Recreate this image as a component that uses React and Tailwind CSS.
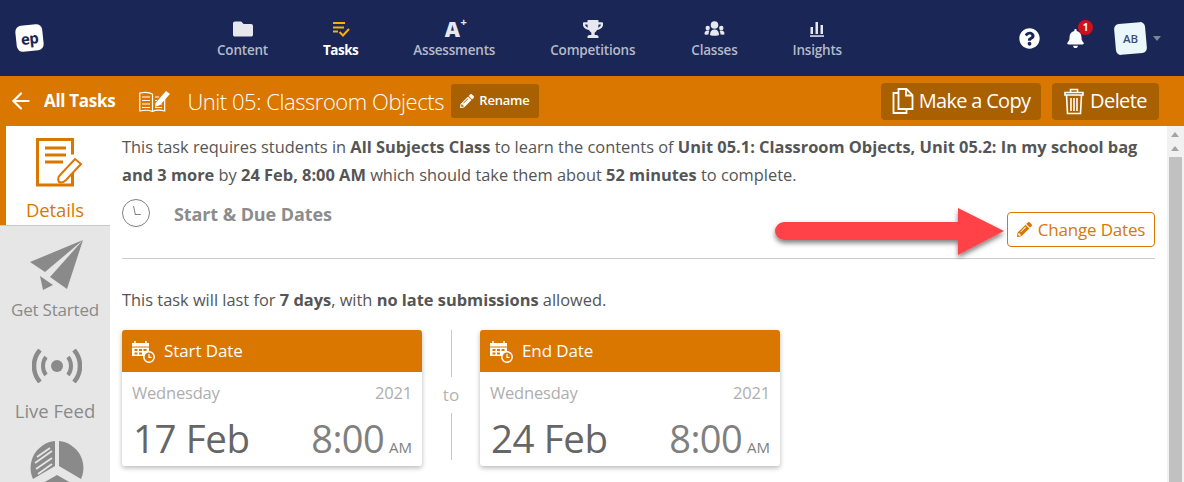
import { ArrowLeft } from 'lucide-react';
import { FaFolder, FaTrophy, FaQuestionCircle, FaBell, FaPencilAlt } from 'react-icons/fa';

const font = { fontFamily: '"Open Sans", "Noto Sans", sans-serif' };

function NavItem({ icon, label, active }) {
  return (
    <div className="flex flex-col items-center">
      <div className="h-[24px] flex items-center justify-center">{icon}</div>
      <div className={active ? 'text-[13.500px] leading-[18px] font-bold text-white tracking-[-0.5px]' : 'text-[13.500px] leading-[18px] font-semibold text-[#b4bac9] tracking-[-0.2px]'}>
        {label}
      </div>
    </div>
  );
}

function TasksIcon() {
  return (
    <svg width="18" height="16" viewBox="0 0 18 16" fill="none" stroke="#fbb000" strokeWidth="2">
      <path d="M1 2h12M1 6.500h11M1 10.500h5" />
      <path d="M7.500 11l3.500 3.500 6-6.500" />
    </svg>
  );
}

function APlusIcon() {
  return (
    <div className="relative text-[21px] leading-none font-extrabold text-[#e6e8ee] pr-1">
      A<span className="absolute top-[-3px] right-[-3px] text-[11px] font-bold">+</span>
    </div>
  );
}

function ClassesIcon() {
  return (
    <svg width="21" height="16" viewBox="0 0 20 16" fill="#e6e8ee">
      <circle cx="10" cy="4" r="3.800" />
      <circle cx="3.200" cy="7" r="2.200" />
      <circle cx="16.800" cy="7" r="2.200" />
      <path d="M5.500 14c0-3.500 1.500-5.500 4.500-5.500s4.500 2 4.500 5.500c0 1-9 1-9 0z" />
      <path d="M0 13c0-2 1-3.500 3.200-3.500 .8 0 1.200.2 1.600.4C4.200 11 4 12.300 4 13.600 2 13.800 0 13.800 0 13z" />
      <path d="M20 13c0-2-1-3.500-3.200-3.500-.8 0-1.200.2-1.600.4.600 1.100.8 2.400.8 3.700 2 .2 4 .2 4-.6z" />
    </svg>
  );
}

function InsightsIcon() {
  return (
    <svg width="14" height="15" viewBox="0 0 14 15" fill="#e6e8ee">
      <rect x="0.500" y="5" width="2.500" height="7" />
      <rect x="5.500" y="0" width="2.500" height="12" />
      <rect x="10.500" y="3" width="2.500" height="9" />
      <rect x="0" y="13.300" width="14" height="1.500" />
    </svg>
  );
}

function BookIcon() {
  return (
    <svg width="32" height="22" viewBox="0 0 32 22" fill="none" stroke="#fff" strokeWidth="1.200">
      <path d="M13.500 4C10 2 5 2 .8 3v18c4.500-1 9.500-1 12.700 .5 3-1.500 8-1.500 12.200-.5V9" />
      <path d="M13.500 4v17.500" />
      <path d="M3 7h8M3 10.500h8M3 14h8M3 17.500h8M16 14h7M16 17.500h7M16 10.500h2M16 7h4" />
      <path d="M17 12.500l10-11.500 4 3-10 11-5 2z" fill="#fff" stroke="none" />
    </svg>
  );
}

function CopyIcon() {
  return (
    <svg width="22" height="26" viewBox="0 0 22 26" fill="none" stroke="#fff" strokeWidth="1.800">
      <path d="M6.500 5H1.500v20h13v-4" />
      <path d="M6.500 1h8l6 6v14h-14z" />
      <path d="M14 1v6.500h6.500" />
    </svg>
  );
}

function TrashIcon() {
  return (
    <svg width="20" height="27" viewBox="0 0 20 27" fill="none" stroke="#fff" strokeWidth="1.600">
      <path d="M1 4.500h18v2.500H1z" />
      <path d="M6.500 4.500V1.500h7v3" />
      <path d="M2.500 7l1 18.500h13l1-18.500" />
      <path d="M7 10v13M10 10v13M13 10v13" />
    </svg>
  );
}

function DetailsIcon() {
  return (
    <svg width="48" height="49" viewBox="0 0 48 49" fill="none" stroke="#da7700">
      <path d="M36.500 30v17H1.500V1.500h35v15" strokeWidth="3" />
      <path d="M9 10h21M9 17h21M9 24h18" strokeWidth="2.800" />
      <path d="M23 44c-2-4 0-6 2-8l14-15 6 5-15 16c-2 2-5 3-7 2z" strokeWidth="2" fill="#fff" />
    </svg>
  );
}

function PlaneIcon() {
  return (
    <svg width="54" height="50" viewBox="0 0 54 50" fill="#8a8a8a">
      <path d="M53 0L0 22l15 10z" />
      <path d="M53 0L20 37l17 12z" />
      <path d="M10 36l3 14 10-5z" />
    </svg>
  );
}

function FeedIcon() {
  return (
    <svg width="50" height="34" viewBox="0 0 50 34" fill="none" stroke="#8a8a8a" strokeWidth="4" strokeLinecap="butt">
      <circle cx="25" cy="17" r="6" fill="#8a8a8a" stroke="none" />
      <path d="M14 8c-4 5-4 13 0 18M36 8c4 5 4 13 0 18" />
      <path d="M8 1c-8 9-8 23 0 32M42 1c8 9 8 23 0 32" strokeWidth="4.500" />
    </svg>
  );
}

function PieIcon() {
  return (
    <svg width="54" height="42" viewBox="0 0 54 42" fill="#8a8a8a">
      <path d="M25 1A27 27 0 0 0 3 39l22-13z" />
      <path d="M29 1a27 27 0 0 1 22 38L29 26z" />
      <path d="M27 35L13 43h28z" />
      <path d="M7 17l13-9M5 23l17-12M6 29l16-11M8 34l14-10" stroke="#e6e6e6" strokeWidth="1.800" />
    </svg>
  );
}

function CalendarIcon() {
  return (
    <svg width="24" height="23" viewBox="0 0 24 23" fill="none" stroke="#fff">
      <path d="M1 3h17v13H1z" fill="#fff" stroke="none" />
      <path d="M1 7h17" stroke="#da7700" strokeWidth="1" />
      <path d="M4 1v4M15 1v4" strokeWidth="1.500" />
      <path d="M3.500 9h3v2h-3zM8 9h3v2H8zM12.500 9h3v2h-3zM3.500 12.500h3v2h-3zM8 12.500h3v2H8z" fill="#da7700" stroke="none" />
      <circle cx="18" cy="17" r="5.200" fill="#da7700" strokeWidth="1.500" />
      <path d="M18 14v3.300h2.500" strokeWidth="1.200" />
    </svg>
  );
}

function DateCard({ title, date }) {
  return (
    <div className="w-[300px] h-[136px] rounded-[3px] bg-white shadow-[0_2px_5px_rgba(0,0,0,0.28)] overflow-hidden">
      <div className="h-[42px] bg-[#da7700] flex items-center pl-[9px] gap-[9px] text-white text-[17px] tracking-[-0.1px]">
        <CalendarIcon />
        <span>{title}</span>
      </div>
      <div className="px-[10px] pt-[9px]">
        <div className="flex justify-between text-[16.500px] leading-[24px] text-[#aeaeae] tracking-[-0.2px]">
          <span>Wednesday</span>
          <span>2021</span>
        </div>
        <div className="flex justify-between items-baseline mt-[10px] leading-[46px]">
          <span className="text-[38.500px] text-[#666] ml-[1px] tracking-[-0.4px]">{date}</span>
          <span className="text-[38px] text-[#808080] tracking-[-0.6px]">
            8:00<span className="text-[15px] ml-[5px] tracking-normal">AM</span>
          </span>
        </div>
      </div>
    </div>
  );
}

export default function App() {
  return (
    <div className="relative w-[1184px] h-[482px] overflow-hidden bg-white" style={font}>
      {/* Top nav */}
      <div className="relative h-[76px] bg-[#1a2655] flex items-center pl-[16px]">
        <div className="w-[27px] h-[26px] rounded-[6px] bg-white rotate-[-6deg] flex items-center justify-center text-[#1a2655] text-[15px] font-bold tracking-[-0.5px] mt-[-1px]">ep</div>
        <div className="flex gap-[55px] ml-[174px]">
          <NavItem label="Content" icon={<FaFolder className="text-[#e6e8ee] text-[20px]" />} />
          <div className="relative">
            <div className="absolute top-[-21px] left-[-8px] w-[51px] h-[4px] rounded-b-[3px] bg-[#fbb000]" />
            <NavItem active label="Tasks" icon={<TasksIcon />} />
          </div>
          <NavItem label="Assessments" icon={<APlusIcon />} />
          <NavItem label="Competitions" icon={<FaTrophy className="text-[#e6e8ee] text-[20px]" />} />
          <div className="ml-[1px]"><NavItem label="Classes" icon={<ClassesIcon />} /></div>
          <NavItem label="Insights" icon={<InsightsIcon />} />
        </div>
        <div className="ml-auto flex items-center pr-[23px]">
          <FaQuestionCircle className="text-white text-[21px] mr-[26px]" />
          <div className="relative mr-[30px]">
            <FaBell className="text-white text-[19px]" />
            <div className="absolute top-[-9px] right-[-8px] w-[15px] h-[15px] rounded-full bg-[#d0101c] text-white text-[10px] font-bold flex items-center justify-center">1</div>
          </div>
          <div className="w-[31px] h-[31px] rounded-[5px] bg-[#eaf7fb] rotate-[-5deg] flex items-center justify-center">
            <span className="rotate-[5deg] text-[#3d4a77] text-[11.500px] font-semibold">AB</span>
          </div>
          <div className="ml-[7px] w-0 h-0 border-x-[4px] border-x-transparent border-t-[5px] border-t-[#7c849c]" />
        </div>
      </div>

      {/* Orange bar */}
      <div className="h-[50px] bg-[#da7700] flex items-center text-white pl-[8px] pr-[25px]">
        <ArrowLeft size={26} strokeWidth={2} />
        <span className="ml-[10px] text-[17px] font-bold tracking-[-0.3px]">All Tasks</span>
        <div className="ml-[24px]"><BookIcon /></div>
        <span className="ml-[16px] text-[22px] font-light tracking-[-0.45px]">Unit 05: Classroom Objects</span>
        <div className="ml-[7px] h-[34px] w-[88px] rounded-[3px] bg-[#a96000] flex items-center justify-center gap-[5px] text-[13px] font-semibold tracking-[-0.2px]">
          <FaPencilAlt className="text-[14px]" />
          Rename
        </div>
        <div className="ml-auto flex gap-[11px]">
          <div className="h-[37px] w-[160px] rounded-[4px] bg-[#a96000] flex items-center justify-center gap-[5px] text-[20px] tracking-[-0.7px]">
            <CopyIcon />
            Make a Copy
          </div>
          <div className="h-[37px] w-[107px] rounded-[4px] bg-[#a96000] flex items-center justify-center gap-[6px] text-[20px] tracking-[-0.6px]">
            <TrashIcon />
            Delete
          </div>
        </div>
      </div>

      {/* Body */}
      <div className="flex h-[356px]">
        <div className="w-[110px] shrink-0 bg-[#e6e6e6] flex flex-col items-center overflow-hidden">
          <div className="w-full h-[100px] bg-white border-l-[6px] border-[#da7700] flex flex-col items-center pt-[12px] pr-[6px]">
            <div className="ml-[9px]"><DetailsIcon /></div>
            <span className="mt-[11px] text-[18.500px] leading-[24px] text-[#da7700] tracking-[-0.1px]">Details</span>
          </div>
          <div className="w-full h-px bg-[#c9c9c9]" />
          <div className="mt-[14px] ml-[3px]"><PlaneIcon /></div>
          <span className="mt-[8px] text-[17px] leading-[24px] text-[#8a8a8a] tracking-[-0.2px]">Get Started</span>
          <div className="mt-[27px] ml-[4px]"><FeedIcon /></div>
          <span className="mt-[16px] text-[18.500px] leading-[24px] text-[#8a8a8a]">Live Feed</span>
          <div className="mt-[17px] ml-[4px]"><PieIcon /></div>
        </div>

        <div className="flex-1 pl-[12px] pr-[12px] text-[#555]">
          <p className="text-[16.400px] leading-[28px] mt-[7px]">
            This task requires students in <b>All Subjects Class</b> to learn the contents of <b>Unit 05.1: Classroom Objects, Unit 05.2: In my school bag</b> <b>and 3 more</b> by <b>24 Feb, 8:00 AM</b> which should take them about <b>52 minutes</b> to complete.
          </p>
          <div className="flex items-start h-[70px] border-b border-[#cccccc]">
            <div className="mt-[10px] w-[28px] h-[28px] rounded-full border-[1.500px] border-[#808080] relative">
              <div className="absolute left-[11px] top-[6px] w-[6px] h-[9px] border-l-[1.500px] border-b-[1.500px] border-[#808080] skew-x-[12deg]" />
            </div>
            <span className="ml-[24px] mt-[13px] text-[18px] leading-[24px] font-bold text-[#8c8c8c] tracking-[-0.1px]">Start &amp; Due Dates</span>
            <div className="ml-auto mt-[23px] h-[35px] w-[148px] rounded-[4px] border border-[#da7700] text-[#da7700] flex items-center justify-center gap-[6px] text-[17px] tracking-[-0.2px]">
              <FaPencilAlt className="text-[15px]" />
              Change Dates
            </div>
          </div>
          <p className="mt-[27px] text-[16.400px] leading-[28px]">
            This task will last for <b>7 days</b>, with <b>no late submissions</b> allowed.
          </p>
          <div className="flex mt-[16px]">
            <DateCard title="Start Date" date="17 Feb" />
            <div className="w-[58px] h-[130px] flex flex-col items-center">
              <div className="w-px flex-1 bg-[#c9c9c9]" />
              <span className="text-[17px] leading-[36px] text-[#b3b3b3]">to</span>
              <div className="w-px flex-1 bg-[#c9c9c9]" />
            </div>
            <DateCard title="End Date" date="24 Feb" />
          </div>
        </div>

        {/* Scrollbar */}
        <div className="w-[17px] shrink-0 bg-[#f1f1f1] flex flex-col items-center pt-[6px] pr-[1px]">
          <div className="w-0 h-0 border-x-[4px] border-x-transparent border-b-[5px] border-b-[#a3a3a3]" />
          <div className="mt-[9px] w-0 h-0 border-x-[4px] border-x-transparent border-b-[5px] border-b-[#a3a3a3]" />
          <div className="mt-[6px] w-[13px] flex-1 bg-[#c1c1c1]" />
        </div>
      </div>

      {/* Annotation arrow */}
      <svg className="absolute left-[770px] top-[200px]" width="240" height="60" viewBox="0 0 240 60">
        <defs>
          <filter id="arrowShadow" x="-10%" y="-30%" width="120%" height="170%">
            <feDropShadow dx="0" dy="3" stdDeviation="2.500" floodColor="#000" floodOpacity="0.5" />
          </filter>
        </defs>
        <path d="M14 22h174V8l46 23-46 24V40H14a9 9 0 0 1 0-18z" fill="#ff4347" filter="url(#arrowShadow)" />
      </svg>
    </div>
  );
}
